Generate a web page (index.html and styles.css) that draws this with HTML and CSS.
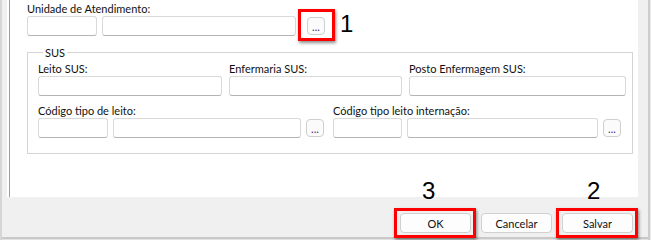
FILE: index.html
```html
<!DOCTYPE html>
<html lang="pt-BR">
  <head>
    <meta charset="UTF-8" />
    <meta name="viewport" content="width=device-width, initial-scale=1.0" />
    <title>Unidade de Atendimento</title>
    <link rel="stylesheet" href="styles.css">
  </head>
  <body>
    <div class="window">
      <div class="panel">
        <div class="content">
          <div class="field">
            <label>Unidade de Atendimento:</label>
            <div class="line">
              <input type="text" class="w-code" />
              <input type="text" class="w-desc" />
              <span class="mark mark-dots"><button class="dots">...</button></span>
            </div>
          </div>

          <fieldset class="sus">
            <legend>SUS</legend>
            <div class="sus-row">
              <div class="field">
                <label>Leito SUS:</label>
                <input type="text" />
              </div>
              <div class="field">
                <label>Enfermaria SUS:</label>
                <input type="text" />
              </div>
              <div class="field">
                <label>Posto Enfermagem SUS:</label>
                <input type="text" />
              </div>
            </div>
            <div class="sus-row2">
              <div class="field">
                <label>Código tipo de leito:</label>
                <div class="line">
                  <input type="text" class="w-code" />
                  <input type="text" class="w-leito" />
                  <button class="dots">...</button>
                </div>
              </div>
              <div class="field">
                <label>Código tipo leito internação:</label>
                <div class="line">
                  <input type="text" class="w-code2" />
                  <input type="text" class="w-intern" />
                  <button class="dots">...</button>
                </div>
              </div>
            </div>
          </fieldset>
        </div>
      </div>

      <div class="footer">
        <span class="mark mark-btn"><button class="btn">OK</button></span>
        <button class="btn">Cancelar</button>
        <span class="mark mark-btn"><button class="btn">Salvar</button></span>
      </div>

      <span class="num num-1">1</span>
      <span class="num num-3">3</span>
      <span class="num num-2">2</span>
    </div>
  </body>
</html>
```

FILE: styles.css
```css
body {
  margin: 0;
  background-color: #f0f0f0;
  font-family: Lato, "Noto Sans", sans-serif;
  font-size: 11px;
  color: #111;
}

.window {
  position: relative;
  width: 651px;
  height: 240px;
  display: flex;
  flex-direction: column;
  background-color: #f0f0f0;
  box-shadow: inset 2px 0 #d6d6d6, inset -1px 0 #e8e8e8,
    inset -3px 0 #cdcdcd, inset 0 -1px #e2e2e2, inset 0 -3px #c9c9c9;
}

.panel {
  height: 197px;
  margin: 0 13px 0 7px;
  padding-left: 2px;
  background-color: #fff;
}

.content {
  height: 100%;
  box-sizing: border-box;
  border-left: 1px solid #9d9d9d;
  padding: 2px 5px 0 17px;
}

.field label {
  display: block;
  height: 14px;
  line-height: 14px;
  white-space: nowrap;
}

.line {
  display: flex;
  align-items: center;
  gap: 5px;
}

input[type="text"] {
  display: block;
  box-sizing: border-box;
  height: 20px;
  width: 100%;
  margin: 0;
  padding: 0 3px;
  border: 1px solid #d9d9d9;
  border-bottom-color: #b4b4b4;
  border-radius: 3px;
  background-color: #fff;
  font: inherit;
}

.line input[type="text"] {
  flex: none;
}

.w-code {
  width: 70px !important;
}

.w-desc {
  width: 194px !important;
}

.w-leito {
  width: 188px !important;
}

.w-code2 {
  width: 69px !important;
}

.w-intern {
  width: 191px !important;
}

.dots {
  box-sizing: border-box;
  width: 18px;
  height: 18px;
  padding: 0;
  border: 1px solid #cfcfcf;
  border-radius: 4px;
  background-color: #fbfbfb;
  font: inherit;
  font-size: 11px;
  line-height: 18px;
  color: #4b2a7a;
}

.mark {
  position: relative;
  display: inline-block;
}

.mark::after {
  content: "";
  position: absolute;
  box-sizing: border-box;
  border: 3px solid #f00;
  box-shadow: 1px 2px 3px rgba(0, 0, 0, 0.45);
}

.mark-dots {
  margin-left: 6px;
  height: 18px;
}

.mark-dots::after {
  left: -9px;
  top: -8px;
  width: 37px;
  height: 32px;
}

.mark-btn::after {
  left: -6px;
  top: -5px;
  width: 82px;
  height: 30px;
}

.sus {
  margin: 9px 0 0;
  padding: 2px 6px 15px 10px;
  border: 1px solid #d5d5d5;
  min-width: 0;
}

.sus legend {
  margin-left: 5px;
  padding: 0 2px;
  line-height: 15px;
}

.sus-row {
  display: grid;
  grid-template-columns: 184px 173px 1fr;
  column-gap: 7px;
}

.sus-row2 {
  display: flex;
  gap: 9px;
  margin-top: 8px;
}

.footer {
  flex: 1;
  display: flex;
  justify-content: flex-end;
  align-items: flex-start;
  gap: 10px;
  padding: 16px 18px 0 0;
}

.btn {
  display: block;
  box-sizing: border-box;
  width: 71px;
  height: 20px;
  padding: 0;
  border: 1px solid #d0d0d0;
  border-radius: 4px;
  background-color: #fdfdfd;
  font: inherit;
  color: #111;
}

.num {
  position: absolute;
  font-family: "Liberation Sans", Arial, sans-serif;
  font-size: 24px;
  line-height: 24px;
  color: #000;
}

.num-1 {
  left: 340px;
  top: 12px;
}

.num-3 {
  left: 422px;
  top: 179px;
}

.num-2 {
  left: 587px;
  top: 179px;
}
```
